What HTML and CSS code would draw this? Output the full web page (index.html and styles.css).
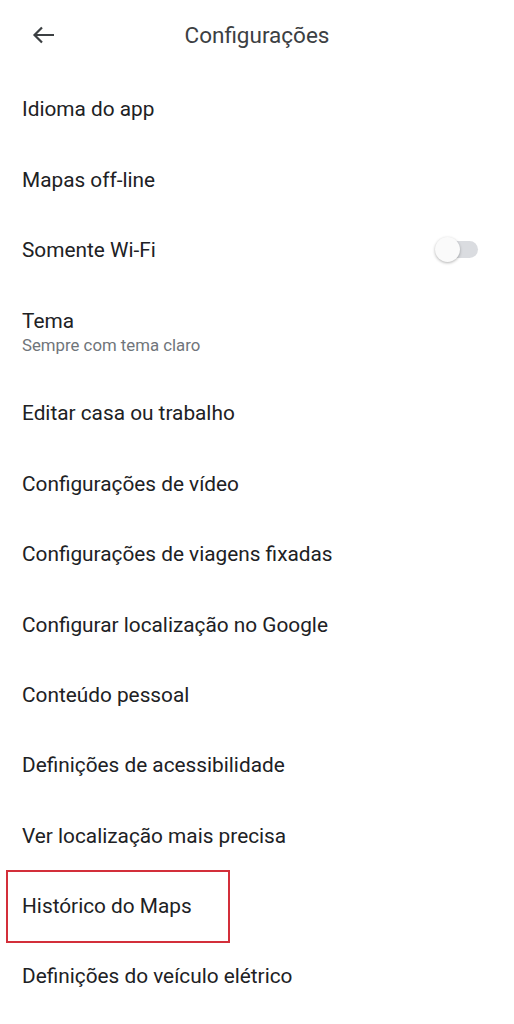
FILE: index.html
```html
<!DOCTYPE html>
<html lang="pt-BR">
<head>
  <meta charset="UTF-8" />
  <meta name="viewport" content="width=device-width, initial-scale=1.0"/>
  <title>Configurações</title>
  <link rel="stylesheet" href="styles.css">
</head>
<body>

  <header class="top-bar">
    <button class="back-btn" aria-label="Voltar">
      <svg width="26" height="26" viewBox="0 0 26 26">
        <path d="M24 13H4.5M12 5.5L4.5 13l7.5 7.5" fill="none" stroke="#3c4043" stroke-width="2.2"/>
      </svg>
    </button>
    <h1>Configurações</h1>
  </header>

  <ul class="settings">
    <li class="item">Idioma do app</li>
    <li class="item">Mapas off-line</li>
    <li class="item item-toggle">
      <span>Somente Wi-Fi</span>
      <span class="switch"><span class="thumb"></span></span>
    </li>
    <li class="item item-tall">
      <span>Tema</span>
      <span class="sub">Sempre com tema claro</span>
    </li>
    <li class="item">Editar casa ou trabalho</li>
    <li class="item">Configurações de vídeo</li>
    <li class="item">Configurações de viagens fixadas</li>
    <li class="item">Configurar localização no Google</li>
    <li class="item">Conteúdo pessoal</li>
    <li class="item">Definições de acessibilidade</li>
    <li class="item">Ver localização mais precisa</li>
    <li class="item item-marked"><span class="mark">Histórico do Maps</span></li>
    <li class="item">Definições do veículo elétrico</li>
  </ul>

</body>
</html>
```

FILE: styles.css
```css
* { box-sizing: border-box; }

body {
  margin: 0;
  font-family: Roboto, 'Noto Sans', sans-serif;
  background: #fff;
  color: #202124;
}

.top-bar {
  height: 74px;
  display: flex;
  align-items: center;
  position: relative;
  padding-left: 30px;
}

.back-btn {
  border: none;
  background: none;
  padding: 0;
  width: 26px;
  height: 26px;
  display: flex;
  margin-top: -4px;
}

.top-bar h1 {
  position: absolute;
  left: 0;
  right: 0;
  top: 0;
  margin: 0;
  line-height: 70px;
  text-align: center;
  font-size: 22.5px;
  font-weight: 400;
  color: #3c4043;
  pointer-events: none;
}

.settings {
  list-style: none;
  margin: 0;
  padding: 0;
}

.item {
  height: 70.4px;
  display: flex;
  align-items: center;
  padding: 0 22px;
  font-size: 20.8px;
  color: #202124;
}

.item-toggle {
  justify-content: space-between;
  padding-right: 36px;
}

.item-tall {
  height: 93px;
  flex-direction: column;
  align-items: flex-start;
  justify-content: center;
}

.item-tall .sub {
  font-size: 16.8px;
  color: #70757a;
  margin-top: 2px;
}

.switch {
  position: relative;
  width: 42px;
  height: 17px;
  border-radius: 9px;
  background: #dadce0;
}

.thumb {
  position: absolute;
  left: -1px;
  top: -4px;
  width: 25px;
  height: 25px;
  border-radius: 50%;
  background: #fafafa;
  box-shadow: 0 1px 3px rgba(0, 0, 0, 0.3);
}

.item-marked {
  padding-left: 6px;
}

.mark {
  border: 2px solid #d32f3a;
  height: 73px;
  width: 224px;
  display: flex;
  align-items: center;
  padding-left: 14px;
}
```
